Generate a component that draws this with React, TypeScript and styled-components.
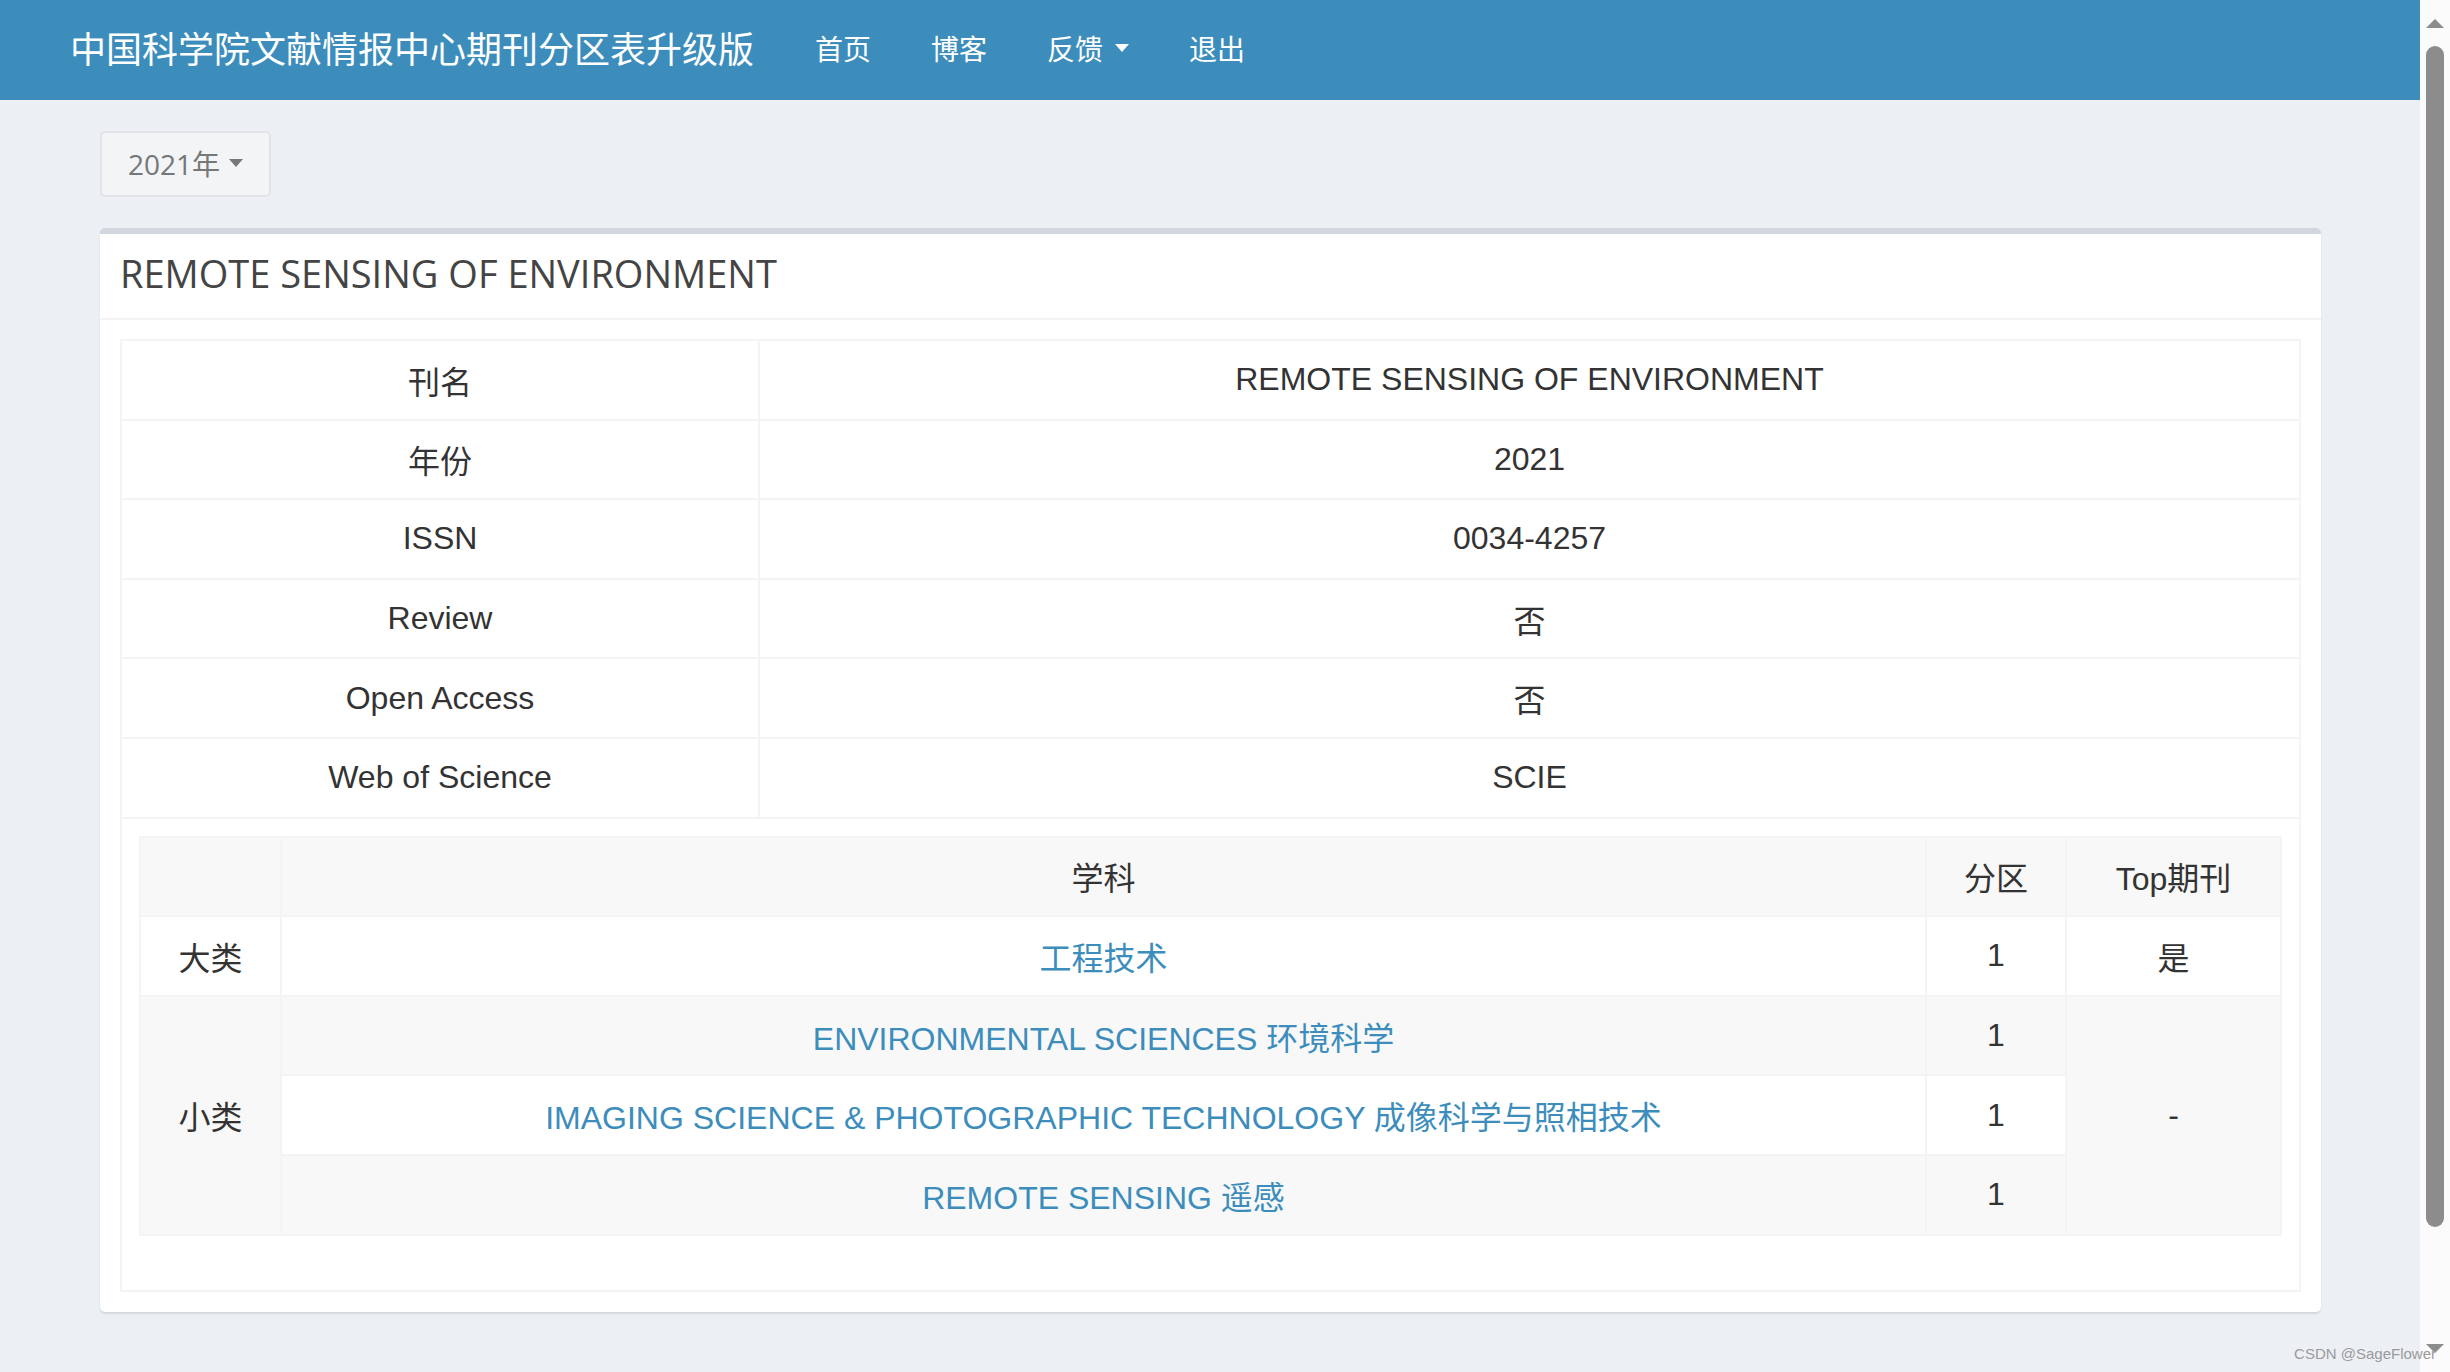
import React from "react";
import styled, { createGlobalStyle } from "styled-components";

const GlobalStyle = createGlobalStyle`
  html, body {
    margin: 0;
    padding: 0;
    overflow: hidden;
    background: #ecf0f5;
  }
  * { box-sizing: border-box; }
`;

const CJK = `"Noto Sans CJK SC", sans-serif`;

const Shell = styled.div`
  display: flex;
  width: 2450px;
  height: 1372px;
  position: relative;
`;

const Page = styled.div`
  flex: 1;
  display: flex;
  flex-direction: column;
  background: #ecf0f5;
`;

const Navbar = styled.header`
  height: 100px;
  background: #3c8dbc;
  display: flex;
  align-items: center;
  padding: 0 0 5px 70px;
  color: #fff;
`;

const Brand = styled.div`
  font-family: "Open Sans", ${CJK};
  font-size: 36px;
  margin-right: 31px;
`;

const NavLink = styled.a`
  font-family: "Open Sans", ${CJK};
  font-size: 28px;
  color: #fff;
  padding: 0 30px;
  display: flex;
  align-items: center;
  cursor: pointer;
`;

const Caret = styled.span<{ $color?: string; $gap?: number }>`
  display: inline-block;
  width: 0;
  height: 0;
  margin-left: ${(p) => p.$gap ?? 12}px;
  border-top: 8px solid ${(p) => p.$color || "#fff"};
  border-left: 7px solid transparent;
  border-right: 7px solid transparent;
`;

const Content = styled.main`
  padding: 31px 99px 0 100px;
  display: flex;
  flex-direction: column;
  align-items: flex-start;
  gap: 31px;
`;

const YearButton = styled.button`
  height: 66px;
  padding: 0 26px 2px;
  display: flex;
  align-items: center;
  white-space: nowrap;
  background: #f3f4f6;
  border: 2px solid #e1e3e7;
  border-radius: 5px;
  color: #777;
  font-family: "Open Sans", ${CJK};
  font-size: 28px;
`;

const Card = styled.section`
  width: 100%;
  background: #fff;
  border-top: 6px solid #d2d6de;
  border-radius: 5px;
  box-shadow: 0 2px 2px rgba(0, 0, 0, 0.1);
`;

const CardHeader = styled.div`
  height: 86px;
  padding: 0 20px 6px;
  display: flex;
  align-items: center;
  border-bottom: 2px solid #f4f4f4;
`;

const CardTitle = styled.h3`
  margin: 0;
  font-family: "Open Sans", ${CJK};
  font-weight: 400;
  font-size: 38px;
  color: #444;
`;

const CardBody = styled.div`
  padding: 19px 20px 20px;
`;

const Table = styled.table`
  width: 100%;
  border-collapse: collapse;
  border: 2px solid #f4f4f4;
  font-family: "Liberation Sans", ${CJK};
  font-size: 32px;
  color: #333;
  table-layout: fixed;
`;

const Row = styled.tr<{ $striped?: boolean }>`
  background: ${(p) => (p.$striped ? "#f8f8f8" : "#fff")};
`;

const Cell = styled.td`
  height: 79.6px;
  padding: 0 17px;
  border: 2px solid #f4f4f4;
  text-align: center;
  vertical-align: middle;
`;

const WrapCell = styled.td`
  padding: 17px 17px 54px;
  border: 2px solid #f4f4f4;
`;

const Link = styled.a`
  color: #3c8dbc;
  text-decoration: none;
`;

const Scrollbar = styled.div`
  width: 30px;
  background: #fbfbfb;
  display: flex;
  flex-direction: column;
  align-items: center;
  padding-top: 19px;
`;

const Arrow = styled.span<{ $down?: boolean }>`
  width: 0;
  height: 0;
  border-left: 9px solid transparent;
  border-right: 9px solid transparent;
  ${(p) =>
    p.$down
      ? "border-top: 9px solid #8c8c8c; margin-top: auto; margin-bottom: 19px;"
      : "border-bottom: 9px solid #8c8c8c;"}
`;

const Thumb = styled.div`
  width: 18px;
  height: 1181px;
  margin-top: 18px;
  background: #8c8c8c;
  border-radius: 9px;
`;

const Watermark = styled.div`
  position: absolute;
  right: 14px;
  bottom: 10px;
  font-family: "Liberation Sans", sans-serif;
  font-size: 15px;
  color: #9a9a9a;
`;

const info = [
  ["刊名", "REMOTE SENSING OF ENVIRONMENT"],
  ["年份", "2021"],
  ["ISSN", "0034-4257"],
  ["Review", "否"],
  ["Open Access", "否"],
  ["Web of Science", "SCIE"],
];

const small = [
  "ENVIRONMENTAL SCIENCES 环境科学",
  "IMAGING SCIENCE & PHOTOGRAPHIC TECHNOLOGY 成像科学与照相技术",
  "REMOTE SENSING 遥感",
];

export default function App() {
  return (
    <Shell>
      <GlobalStyle />
      <Page>
        <Navbar>
          <Brand>中国科学院文献情报中心期刊分区表升级版</Brand>
          <NavLink>首页</NavLink>
          <NavLink>博客</NavLink>
          <NavLink>
            反馈<Caret />
          </NavLink>
          <NavLink>退出</NavLink>
        </Navbar>
        <Content>
          <YearButton>
            2021年<Caret $color="#777" $gap={9} />
          </YearButton>
          <Card>
            <CardHeader>
              <CardTitle>REMOTE SENSING OF ENVIRONMENT</CardTitle>
            </CardHeader>
            <CardBody>
              <Table>
                <colgroup>
                  <col style={{ width: 638 }} />
                  <col />
                </colgroup>
                <tbody>
                  {info.map(([k, v]) => (
                    <Row key={k}>
                      <Cell>{k}</Cell>
                      <Cell>{v}</Cell>
                    </Row>
                  ))}
                  <Row>
                    <WrapCell colSpan={2}>
                      <Table>
                        <colgroup>
                          <col style={{ width: 141 }} />
                          <col />
                          <col style={{ width: 140 }} />
                          <col style={{ width: 215 }} />
                        </colgroup>
                        <tbody>
                          <Row $striped>
                            <Cell></Cell>
                            <Cell>学科</Cell>
                            <Cell>分区</Cell>
                            <Cell>Top期刊</Cell>
                          </Row>
                          <Row>
                            <Cell>大类</Cell>
                            <Cell>
                              <Link>工程技术</Link>
                            </Cell>
                            <Cell>1</Cell>
                            <Cell>是</Cell>
                          </Row>
                          {small.map((s, i) => (
                            <Row key={s} $striped={i % 2 === 0}>
                              {i === 0 && <Cell rowSpan={3}>小类</Cell>}
                              <Cell>
                                <Link>{s}</Link>
                              </Cell>
                              <Cell>1</Cell>
                              {i === 0 && <Cell rowSpan={3}>-</Cell>}
                            </Row>
                          ))}
                        </tbody>
                      </Table>
                    </WrapCell>
                  </Row>
                </tbody>
              </Table>
            </CardBody>
          </Card>
        </Content>
      </Page>
      <Scrollbar>
        <Arrow />
        <Thumb />
        <Arrow $down />
      </Scrollbar>
      <Watermark>CSDN @SageFlower</Watermark>
    </Shell>
  );
}
